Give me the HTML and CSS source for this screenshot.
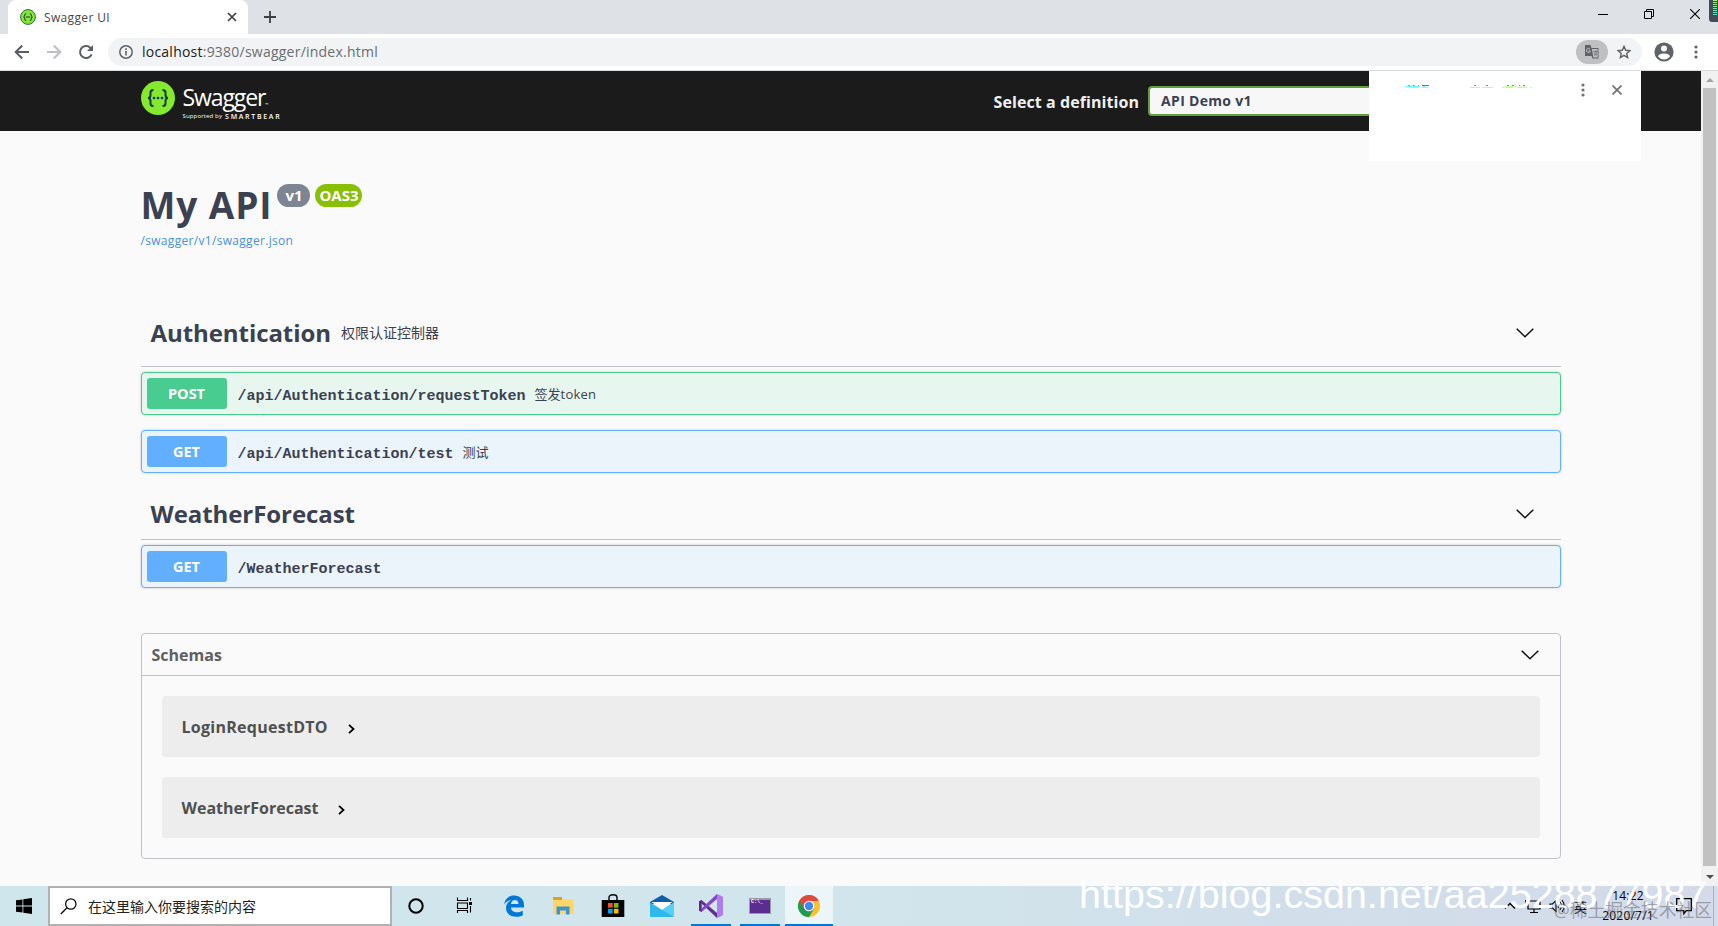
FILE: index.html
```html
<!DOCTYPE html>
<html lang="zh-CN">
<head>
  <meta charset="UTF-8" />
  <meta name="viewport" content="width=device-width, initial-scale=1.0"/>
  <title>Swagger UI</title>
  <link rel="stylesheet" href="styles.css">
</head>
<body>

<!-- browser tabs -->
<div class="tabstrip">
  <div class="tab">
    <svg class="favicon" viewBox="0 0 16 16"><circle cx="8" cy="8" r="7.4" fill="#85ea2d" stroke="#2f6b4a"/><path d="M6.2 4.5Q4.8 4.5 4.8 6T3.6 8Q4.8 8 4.8 10T6.2 11.5M9.8 4.5Q11.2 4.5 11.2 6T12.4 8Q11.2 8 11.2 10T9.8 11.5M5.8 8h4.4" fill="none" stroke="#173647"/></svg>
    <span class="tab-title">Swagger UI</span>
    <svg class="tab-close" viewBox="0 0 10 10"><path d="M1 1l8 8M9 1l-8 8" stroke="#3c4043" stroke-width="1.7"/></svg>
  </div>
  <svg class="new-tab" viewBox="0 0 12 12"><path d="M6 0v12M0 6h12" stroke="#3c4043" stroke-width="1.8"/></svg>
  <div class="window-buttons">
    <svg viewBox="0 0 10 10"><path d="M0 5.5h10" stroke="#000"/></svg>
    <svg viewBox="0 0 10 10"><path d="M.5 2.5h7v7h-7zM2.5 2.500v-2h7v7h-2" fill="none" stroke="#000"/></svg>
    <svg viewBox="0 0 10 10"><path d="M0 0l10 10M10 0L0 10" stroke="#000" stroke-width="1.1"/></svg>
  </div>
  <div class="meter"><span></span></div>
</div>

<!-- address bar -->
<div class="toolbar">
  <svg class="nav" viewBox="0 0 16 16"><path d="M15 8H2M8.200 1.500L1.700 8l6.500 6.500" fill="none" stroke="#5a5e63" stroke-width="2"/></svg>
  <svg class="nav" viewBox="0 0 16 16"><path d="M1 8h13M7.800 1.500L14.300 8l-6.500 6.500" fill="none" stroke="#bdbfc2" stroke-width="2"/></svg>
  <svg class="nav" viewBox="0 0 16 16"><path d="M13.600 10.300A6 6 0 1 1 12.300 3.800L14 5.500" fill="none" stroke="#5a5e63" stroke-width="2"/><path d="M15 1v6H9z" fill="#5a5e63"/></svg>
  <div class="omnibox">
    <svg class="info" viewBox="0 0 14 14"><circle cx="7" cy="7" r="6.200" fill="none" stroke="#5f6368" stroke-width="1.500"/><path d="M7 6v4.500M7 3.300v1.600" stroke="#5f6368" stroke-width="1.600"/></svg>
    <span class="url"><b>localhost</b>:9380/swagger/index.html</span>
    <div class="translate">
      <svg viewBox="0 0 14 14"><path d="M0 0h5.500l1 3H13.500V13.500H7.500L6.500 11H0z" fill="#5f6368"/><path d="M7 4h5.600v8.600H8.300z" fill="#bfc0c2"/><path d="M8.500 6.500h4M10.500 5.500v1M12 6.500q-1 3-3 4M9 7.500q1 2 3 3" stroke="#5f6368" stroke-width=".8" fill="none"/><path d="M5 4.200A2 2 0 1 0 5.400 6H3.500" stroke="#bfc0c2" fill="none"/></svg>
    </div>
    <svg class="star" viewBox="0 0 14 14"><path d="M7 1.400l1.700 3.900 4.200.4-3.200 2.800.95 4.100L7 10.400l-3.650 2.200.95-4.100L1.100 5.700l4.200-.4z" fill="none" stroke="#5f6368" stroke-width="1.400"/></svg>
  </div>
  <svg class="avatar" viewBox="0 0 20 20"><circle cx="10" cy="10" r="9.600" fill="#5f6368"/><circle cx="10" cy="6.600" r="3" fill="#fff"/><path d="M4 14.500Q4.500 11.500 10 11.500T16 14.500Q13.500 17.500 10 17.500T4 14.500z" fill="#fff"/></svg>
  <svg class="kebab" viewBox="0 0 4 14"><g fill="#5f6368"><circle cx="2" cy="2" r="1.600"/><circle cx="2" cy="7" r="1.600"/><circle cx="2" cy="12" r="1.600"/></g></svg>
</div>

<div class="viewport">
  <div class="page">
    <div class="topbar">
      <div class="wrapper topbar-wrapper">
        <div class="logo">
          <svg class="logo-mark" viewBox="0 0 34 34"><circle cx="17" cy="17" r="17" fill="#85ea2d"/><path d="M12.500 9Q9.500 9 9.500 11.500V14Q9.500 17 7 17 9.500 17 9.500 20V22.500Q9.500 25 12.500 25M21.500 9Q24.500 9 24.500 11.500V14Q24.500 17 27 17 24.500 17 24.500 20V22.500Q24.500 25 21.500 25" fill="none" stroke="#173647" stroke-width="2"/><g fill="#173647"><circle cx="13" cy="17" r="1.300"/><circle cx="17" cy="17" r="1.300"/><circle cx="21" cy="17" r="1.300"/></g></svg>
          <div class="logo-text">
            <div class="logo-name">Swagger<small>™</small></div>
            <div class="logo-sub"><span>Supported by</span> <b>SMARTBEAR</b></div>
          </div>
        </div>
        <label class="select-label"><span>Select a definition</span>
          <div class="select">API Demo v1</div>
        </label>
      </div>
    </div>

    <div class="wrapper">
      <div class="info-block">
        <div class="title-row">
          <h1>My API</h1>
          <span class="version">v1</span>
          <span class="version oas">OAS3</span>
        </div>
        <a class="spec-link">/swagger/v1/swagger.json</a>
      </div>

      <div class="tag-header tag-tall">
        <h2>Authentication</h2>
        <small>权限认证控制器</small>
        <svg class="chevron" viewBox="0 0 18 10"><path d="M.7.700L9 8.700 17.300.7" fill="none" stroke="#111" stroke-width="1.500"/></svg>
      </div>
      <div class="opblock post">
        <span class="method">POST</span>
        <span class="path">/api/Authentication/requestToken</span>
        <span class="summary">签发<i>token</i></span>
      </div>
      <div class="opblock get">
        <span class="method">GET</span>
        <span class="path">/api/Authentication/test</span>
        <span class="summary">测试</span>
      </div>

      <div class="tag-header">
        <h2>WeatherForecast</h2>
        <svg class="chevron" viewBox="0 0 18 10"><path d="M.7.700L9 8.700 17.300.7" fill="none" stroke="#111" stroke-width="1.500"/></svg>
      </div>
      <div class="opblock get">
        <span class="method">GET</span>
        <span class="path">/WeatherForecast</span>
      </div>

      <div class="models">
        <div class="models-head">
          <h4>Schemas</h4>
          <svg class="chevron" viewBox="0 0 18 10"><path d="M.7.700L9 8.700 17.300.7" fill="none" stroke="#111" stroke-width="1.500"/></svg>
        </div>
        <div class="model">
          <span class="model-login">LoginRequestDTO</span>
          <svg viewBox="0 0 7 10"><path d="M1 .8L5.500 5 1 9.200" fill="none" stroke="#000" stroke-width="1.800"/></svg>
        </div>
        <div class="model">
          <span>WeatherForecast</span>
          <svg viewBox="0 0 7 10"><path d="M1 .8L5.500 5 1 9.200" fill="none" stroke="#000" stroke-width="1.800"/></svg>
        </div>
      </div>
    </div>
  </div>

  <div class="scrollbar">
    <svg viewBox="0 0 8 4"><path d="M0 4l4-4 4 4z" fill="#a3a3a3"/></svg>
    <div class="thumb"></div>
    <svg viewBox="0 0 8 4"><path d="M0 0l4 4 4-4z" fill="#505050"/></svg>
  </div>

  <!-- translate popup, not fully painted -->
  <div class="popup">
    <svg class="popup-tabs" viewBox="0 0 128 3"><g fill="none"><path d="M2 .5h2M7 .5h2M12 .5h1" stroke="#8fa8c8"/><path d="M16 .5h7" stroke="#2f80ff"/><path d="M0 1.500h11M12 1.500h2M17 1.500h2" stroke="#5ff"/><path d="M7 2.500h5M16 2.500h6" stroke="#7ff"/><path d="M68 .5h2M80 .5h2M101 .5h2M106 .5h2M113 .5h1M117 .5h2" stroke="#7f8f9a"/><path d="M98 1.500h12M113 1.500h2M117 1.500h2" stroke="#c8ffa0"/><path d="M64 2.500h10M76 2.500h11M96 2.500h2M100 2.500h7M111 2.500h10M124 2.500h2" stroke="#bfff8a"/></g></svg>
    <svg class="popup-kebab" viewBox="0 0 4 14"><g fill="#6f7276"><circle cx="2" cy="2" r="1.600"/><circle cx="2" cy="7" r="1.600"/><circle cx="2" cy="12" r="1.600"/></g></svg>
    <svg class="popup-close" viewBox="0 0 10 10"><path d="M.5.500l9 9M9.500.5l-9 9" stroke="#6f7276" stroke-width="1.700"/></svg>
  </div>
</div>

<!-- windows taskbar -->
<div class="taskbar">
  <div class="start"><svg viewBox="0 0 16 16"><path d="M0 2.300L6.500 1.400V7.600H0zM7.300 1.300L16 0V7.600H7.300zM0 8.400H6.500V14.600L0 13.700zM7.300 8.400H16V16L7.300 14.700z"/></svg></div>
  <div class="search">
    <svg viewBox="0 0 17 17"><circle cx="10.800" cy="6" r="5.200" fill="none" stroke="#111" stroke-width="1.300"/><path d="M7 9.700L.8 16" stroke="#111" stroke-width="1.400"/></svg>
    <span>在这里输入你要搜索的内容</span>
  </div>
  <div class="apps">
    <div class="app"><svg viewBox="0 0 24 24"><circle cx="12" cy="12" r="6.700" fill="none" stroke="#000" stroke-width="2"/></svg></div>
    <div class="app"><svg viewBox="0 0 24 24"><path d="M4.500 3.500v3h10v-3M4.500 19v-2.500h10V19M4.500 9h10v5.500h-10zM17.500 4v2.500M17.500 12v6.500" fill="none" stroke="#000" stroke-width="1.100"/><path d="M16 8h3v3h-3z"/></svg></div>
    <div class="app"><svg viewBox="0 0 24 24"><path d="M2 11C3 4.500 7 1.500 12 1.500c6 0 10 4 10 9v3H9c0 3 2.500 4.800 6 4.800 2.500 0 4.300-.6 5.800-1.500v4.500c-1.800 1-4 1.500-6.500 1.500C8 22.800 4 19 4 14c0-4 2.500-6.500 5.500-8C5.500 6.500 3 8.700 2 11zM9 10h7.500c0-2.500-1.300-4-3.600-4C10.700 6 9.300 7.500 9 10z" fill="#0078d7"/></svg></div>
    <div class="app"><svg viewBox="0 0 24 24"><path d="M2 3h8l1 2.500h11.500V20H2z" fill="#ffd667"/><path d="M2 3h9v3H2z" fill="#dfa31b"/><path d="M5.500 20.500v-8h13v8h-3.500v-4H9v4z" fill="#3e93d4"/></svg></div>
    <div class="app"><svg viewBox="0 0 24 24"><path d="M8 6.500V3.500Q8 .8 12 .8t4 2.700v3" fill="none" stroke="#000" stroke-width="1.400"/><path d="M.7 6h22.600v17H.7z"/><path d="M7 9h4.700v4.700H7z" fill="#f25022"/><path d="M12.800 9h4.700v4.700h-4.700z" fill="#7fba00"/><path d="M7 14.800h4.700v4.700H7z" fill="#00a4ef"/><path d="M12.800 14.800h4.700v4.700h-4.700z" fill="#ffb900"/></svg></div>
    <div class="app"><svg viewBox="0 0 24 24"><path d="M0 8L12 1l12 7v2H0z" fill="#0f5fa8"/><path d="M1.500 8h21L12 16z" fill="#fff"/><path d="M0 8.500V23h24V8.500L12 16z" fill="#2fb8ec"/><path d="M24 8.500V23L9.500 14.500 12 16z" fill="#57d0f7"/></svg></div>
    <div class="app open"><svg viewBox="0 0 24 24"><path d="M0 7.500L2.500 6 18 19v5L2.500 9.500v5L0 16.500z" fill="#652d91"/><path d="M0 16.500L2.500 18 18 5V0L2.500 14.500z" fill="#8549c0"/><path d="M0 7.500L2.500 6v12L0 16.500z" fill="#5c2a88"/><path d="M18 0l6 2.800v18.400L18 24z" fill="#b07cf0"/></svg></div>
    <div class="app open"><svg viewBox="0 0 24 24"><path d="M1 4h22v16H1z" fill="#9a9aa5"/><path d="M2 6h20v13H2z" fill="#5c2d91"/></svg><span class="prompt">C:\_</span></div>
    <div class="app open active"><svg viewBox="0 0 24 24"><circle cx="12" cy="12" r="11" fill="#fbc02d"/><path d="M12 12L2.470 6.500A11 11 0 0 0 12 23l5-8.500z" fill="#1e9b52"/><path d="M2.470 6.500A11 11 0 0 1 21.530 6.500L21.800 7H12l-4.700 8z" fill="#dd4b3e"/><circle cx="12" cy="12" r="5.300" fill="#fff"/><circle cx="12" cy="12" r="4.200" fill="#4285f4"/></svg></div>
  </div>
  <div class="tray">
    <svg class="caret" viewBox="0 0 12 8"><path d="M1 6.500l5-5 5 5" fill="none" stroke="#000" stroke-width="1.300"/></svg>
    <svg class="net" viewBox="0 0 16 16"><path d="M3 3h12v8H3zM9 11v3M5 14.500h8M.5 2v4h2.500" fill="none" stroke="#000" stroke-width="1.200"/></svg>
    <svg class="vol" viewBox="0 0 16 16"><path d="M1 6h2.500L7 2.500v11L3.500 10H1zM9 6q1.500 2 0 4M11 4q3 4 0 8M13 2q4.500 6 0 12" fill="none" stroke="#000" stroke-width="1.100"/></svg>
    <span class="ime">英</span>
    <div class="clock"><span>14:22</span><span>2020/7/1</span></div>
    <svg class="notes" viewBox="0 0 16 17"><path d="M.7.700h14.600v12h-5l-2.500 3v-3H.7z" fill="none" stroke="#000" stroke-width="1.300"/></svg>
  </div>
</div>

<div class="mark-url">https://blog.csdn.net/aa2528877987</div>
<div class="mark-site">@稀土掘金技术社区</div>

</body>
</html>
```

FILE: styles.css
```css
* {
  box-sizing: border-box;
}

body {
  margin: 0;
  height: 926px;
  display: flex;
  flex-direction: column;
  overflow: hidden;
  position: relative;
  background: #fafafa;
  color: #3b4151;
  font-family: 'Open Sans', 'Noto Sans CJK SC', sans-serif;
}

svg {
  display: block;
  flex: none;
}

h1, h2, h4 {
  margin: 0;
}

/* browser */
.tabstrip {
  height: 34px;
  flex: none;
  display: flex;
  align-items: center;
  padding-left: 8px;
  background: #dee1e6;
  position: relative;
}

.tab {
  width: 240px;
  height: 34px;
  display: flex;
  align-items: center;
  padding: 0 11px 0 12px;
  background: #fff;
  border-radius: 8px 8px 0 0;
}

.favicon {
  width: 16px;
  height: 16px;
}

.tab-title {
  margin-left: 8px;
  flex: 1;
  font-size: 12px;
  letter-spacing: .35px;
  color: #45494d;
}

.tab-close {
  width: 10px;
  height: 10px;
}

.new-tab {
  width: 12px;
  height: 12px;
  margin-left: 16px;
}

.window-buttons {
  margin-left: auto;
  margin-right: 18px;
  margin-bottom: 6px;
  display: flex;
  gap: 36px;
}

.window-buttons svg {
  width: 10px;
  height: 10px;
}

.meter {
  position: absolute;
  right: 0;
  top: 0;
  width: 9px;
  height: 22px;
  padding: 0 1px 7px 4px;
  background: #434b59;
  border-radius: 0 0 0 3px;
}

.meter span {
  display: block;
  height: 15px;
  background:
    repeating-linear-gradient(transparent 0 1px, #434b59 1px 2px),
    linear-gradient(#a4ee70, #50e0c8);
}

.toolbar {
  height: 37px;
  flex: none;
  display: flex;
  align-items: center;
  padding: 0 20px 0 14px;
  background: #fff;
  border-bottom: 1px solid #d9dcdf;
}

.nav {
  width: 16px;
  height: 16px;
  margin-right: 16px;
}

.omnibox {
  flex: 1;
  height: 28px;
  margin-left: -2px;
  display: flex;
  align-items: center;
  padding: 0 11px;
  background: #f1f3f4;
  border-radius: 14px;
}

.info {
  width: 14px;
  height: 14px;
}

.url {
  margin: -2px 0 0 9px;
  font-size: 14px;
  letter-spacing: .23px;
  color: #6a6e73;
}

.url b {
  font-weight: 400;
  color: #202124;
}

.translate {
  width: 32px;
  height: 24px;
  margin-left: auto;
  border-radius: 12px;
  background: #bfc0c2;
  display: flex;
  align-items: center;
  justify-content: center;
}

.translate svg {
  width: 14px;
  height: 14px;
}

.star {
  width: 14px;
  height: 14px;
  margin-left: 9px;
}

.avatar {
  width: 20px;
  height: 20px;
  margin-left: 12px;
}

.kebab {
  width: 4px;
  height: 14px;
  margin-left: 20px;
}

/* swagger page */
.viewport {
  height: 815px;
  flex: none;
  display: flex;
  position: relative;
}

.page {
  flex: 1;
  background: #fafafa;
}

.wrapper {
  width: 1460px;
  margin: 0 auto;
  padding: 0 20px;
}

.topbar {
  height: 60px;
  background: #1b1b1b;
}

.topbar-wrapper {
  height: 60px;
  display: flex;
  justify-content: space-between;
}

.logo {
  display: flex;
  padding-top: 10px;
}

.logo-mark {
  width: 34px;
  height: 34px;
}

.logo-text {
  margin-left: 8px;
  color: #fff;
}

.logo-name {
  height: 31px;
  line-height: 33px;
  font-size: 23px;
  letter-spacing: -1.100px;
}

.logo-name small {
  font-size: 4px;
}

.logo-sub {
  display: flex;
  gap: 3px;
  line-height: 9px;
  font-size: 6px;
  letter-spacing: .15px;
}

.logo-sub b {
  font-size: 7px;
  font-weight: 600;
  letter-spacing: 1.700px;
}

.select-label {
  width: 567px;
  display: flex;
  align-items: center;
  gap: 9px;
  font-size: 16px;
  font-weight: 700;
  letter-spacing: .08px;
  color: #f0f0f0;
  white-space: nowrap;
}

.select-label span {
  margin-top: 2px;
}

.select {
  flex: 1;
  height: 30px;
  padding-left: 11px;
  line-height: 25px;
  font-size: 14px;
  letter-spacing: .3px;
  color: #3b4151;
  background: #f7f7f7;
  border: 2px solid #62a03f;
  border-radius: 4px;
}

.info-block {
  height: 168px;
  padding-top: 50px;
}

.title-row {
  display: flex;
  align-items: flex-start;
  height: 50px;
}

h1 {
  font-size: 37px;
  line-height: 48px;
  letter-spacing: .9px;
}

.version {
  width: 33px;
  height: 23px;
  margin: 3px 0 0 5px;
  border-radius: 12px;
  background: #7d8492;
  color: #fff;
  font-size: 15px;
  font-weight: 700;
  line-height: 22px;
  text-align: center;
}

.version.oas {
  width: 47px;
  background: #89bf04;
}

.spec-link {
  display: block;
  font-size: 12px;
  line-height: 20px;
  letter-spacing: .31px;
  color: #4990e2;
}

.tag-header {
  height: 52px;
  display: flex;
  align-items: center;
  padding: 0 27px 0 10px;
  border-bottom: 1px solid #c1c2c7;
  margin-bottom: 5px;
}

.tag-header.tag-tall {
  height: 68px;
}

h2 {
  font-size: 24px;
  letter-spacing: -.07px;
}

.tag-header small {
  margin: -2px 0 0 10px;
  font-size: 14px;
}

.chevron {
  width: 18px;
  height: 10px;
  margin-left: auto;
}

.opblock {
  height: 43px;
  display: flex;
  align-items: center;
  padding: 0 5px;
  margin-bottom: 15px;
  border: 1px solid #61affe;
  border-radius: 4px;
  background: #ebf3fb;
  box-shadow: 0 0 3px rgba(0, 0, 0, .19);
}

.opblock.post {
  border-color: #49cc90;
  background: #e8f6f0;
}

.method {
  width: 80px;
  height: 31px;
  line-height: 31px;
  border-radius: 3px;
  background: #61affe;
  color: #fff;
  font-size: 14.500px;
  font-weight: 700;
  text-align: center;
}

.post .method {
  background: #49cc90;
}

.path {
  margin: 5px 0 0 11px;
  font-family: 'Liberation Mono', monospace;
  font-size: 15px;
  font-weight: 700;
}

.summary {
  margin: -1px 0 0 9px;
  font-size: 13px;
}

.summary i {
  font-style: normal;
  letter-spacing: .2px;
}

.models {
  height: 226px;
  margin-top: 45px;
  border: 1px solid #c1c2c7;
  border-radius: 4px;
}

.models-head {
  height: 42px;
  display: flex;
  align-items: center;
  padding: 0 21px 0 10px;
  border-bottom: 1px solid #c1c2c7;
}

h4 {
  font-size: 16px;
  color: #606060;
}

.model {
  height: 61px;
  margin: 20px 20px 0;
  padding-left: 20px;
  display: flex;
  align-items: center;
  background: #ededed;
  border-radius: 4px;
  font-size: 16px;
  font-weight: 700;
  color: #505050;
}

.model-login {
  letter-spacing: .27px;
}

.model svg {
  width: 7px;
  height: 10px;
  margin: 4px 0 0 20px;
}

.scrollbar {
  width: 17px;
  display: flex;
  flex-direction: column;
  align-items: center;
  padding: 7px 0;
  background: #f1f1f1;
}

.scrollbar svg {
  width: 8px;
  height: 4px;
}

.thumb {
  width: 13px;
  height: 778px;
  margin: 6px 0 auto;
  background: #c1c1c1;
}

.popup {
  position: absolute;
  left: 1369px;
  top: 0;
  width: 272px;
  height: 90px;
  background: #fff;
}

.popup-tabs {
  position: absolute;
  left: 37px;
  top: 14px;
  width: 128px;
  height: 3px;
}

.popup-kebab {
  position: absolute;
  left: 212px;
  top: 12px;
  width: 4px;
  height: 14px;
}

.popup-close {
  position: absolute;
  left: 243px;
  top: 14px;
  width: 10px;
  height: 10px;
}

/* taskbar */
.taskbar {
  height: 40px;
  flex: none;
  display: flex;
  background: linear-gradient(90deg, #cfe6ed, #d1e5ec 50%, #d2dfeb 75%, #d4dae9);
}

.start {
  width: 48px;
  display: flex;
  align-items: center;
  justify-content: center;
}

.start svg {
  width: 16px;
  height: 16px;
}

.search {
  width: 344px;
  display: flex;
  align-items: center;
  padding-left: 10px;
  background: #fff;
  border: 2px solid #b1b1b1;
  font-size: 14px;
  color: #222;
}

.search svg {
  width: 17px;
  height: 17px;
  margin-right: 11px;
}

.apps {
  display: flex;
  gap: 1.150px;
}

.app {
  width: 48px;
  display: flex;
  align-items: center;
  justify-content: center;
  position: relative;
}

.app svg {
  width: 24px;
  height: 24px;
}

.app.open::after {
  content: '';
  position: absolute;
  left: 4px;
  right: 4px;
  bottom: 0;
  height: 2px;
  background: #0078d7;
}

.app.active {
  background: #ecf5f8;
}

.app.active::after {
  left: 0;
  right: 0;
}

.prompt {
  position: absolute;
  left: 15px;
  top: 13px;
  font: 700 5px 'Liberation Mono', monospace;
  color: #fff;
}

.tray {
  width: 214px;
  margin-left: auto;
  display: flex;
  align-items: center;
  border-right: 1px solid #aab0bd;
  margin-right: 4px;
  color: #000;
}

.caret {
  width: 12px;
  height: 8px;
  margin-left: 4px;
}

.net {
  width: 16px;
  height: 16px;
  margin-left: 9px;
}

.vol {
  width: 16px;
  height: 16px;
  margin-left: 8px;
}

.ime {
  margin-left: 9px;
  font-size: 13px;
}

.clock {
  width: 54px;
  margin-left: 14px;
  display: flex;
  flex-direction: column;
  align-items: center;
  font-size: 12px;
  letter-spacing: .2px;
  line-height: 20px;
}

.notes {
  width: 16px;
  height: 17px;
  margin-left: 21px;
}

.mark-url {
  position: absolute;
  left: 1079px;
  top: 871px;
  font: 39.400px/46px 'Liberation Sans', sans-serif;
  letter-spacing: .06px;
  color: #fff;
  white-space: nowrap;
}

.mark-site {
  position: absolute;
  right: 6px;
  top: 897px;
  font-size: 17.800px;
  line-height: 26px;
  color: rgba(100, 104, 115, .55);
  white-space: nowrap;
}
```
